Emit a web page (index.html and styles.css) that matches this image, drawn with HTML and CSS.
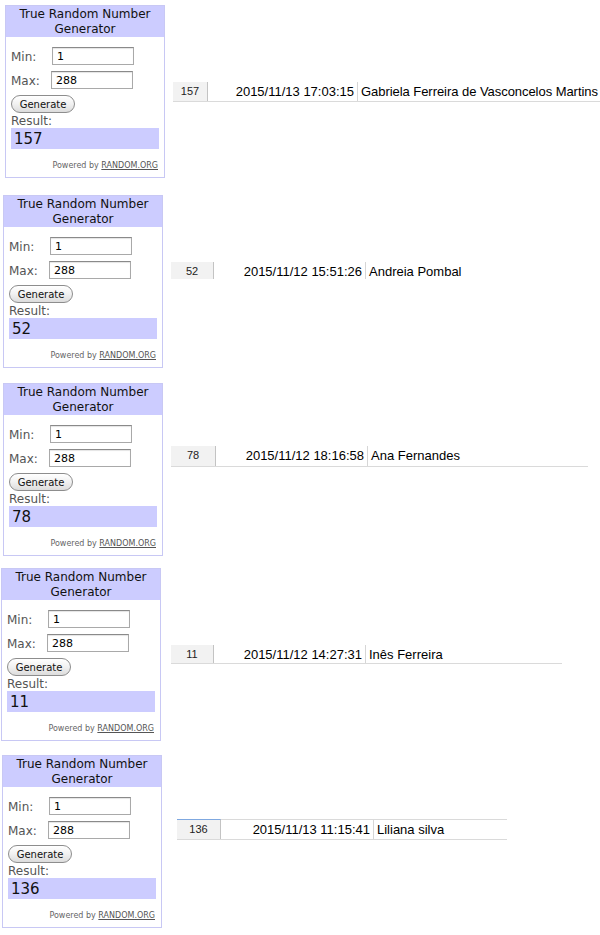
FILE: index.html
```html
<!DOCTYPE html>
<html lang="en">
  <head>
    <meta charset="utf-8">
    <title>True Random Number Generator - draws</title>
    <link rel="stylesheet" href="styles.css">
  </head>
  <body>
    <div class="entry entry-1">
      <div class="trng">
        <div class="trng-head">True Random Number<br>Generator</div>
        <div class="trng-body">
          <div class="field"><label>Min:</label><input type="text" value="1"></div>
          <div class="field"><label>Max:</label><input type="text" value="288" class="shift"></div>
          <button>Generate</button>
          <div class="result-label">Result:</div>
          <div class="result">157</div>
          <div class="powered">Powered by <a href="#">RANDOM.ORG</a></div>
        </div>
      </div>
      <div class="sheet-row">
        <div class="cell-num">157</div>
        <div class="cell-date">2015/11/13 17:03:15</div>
        <div class="cell-name">Gabriela Ferreira de Vasconcelos Martins</div>
      </div>
    </div>

    <div class="entry entry-2">
      <div class="trng">
        <div class="trng-head">True Random Number<br>Generator</div>
        <div class="trng-body">
          <div class="field"><label>Min:</label><input type="text" value="1"></div>
          <div class="field"><label>Max:</label><input type="text" value="288" class="shift"></div>
          <button>Generate</button>
          <div class="result-label">Result:</div>
          <div class="result">52</div>
          <div class="powered">Powered by <a href="#">RANDOM.ORG</a></div>
        </div>
      </div>
      <div class="sheet-row">
        <div class="cell-num">52</div>
        <div class="cell-date">2015/11/12 15:51:26</div>
        <div class="cell-name">Andreia Pombal</div>
      </div>
    </div>

    <div class="entry entry-3">
      <div class="trng">
        <div class="trng-head">True Random Number<br>Generator</div>
        <div class="trng-body">
          <div class="field"><label>Min:</label><input type="text" value="1"></div>
          <div class="field"><label>Max:</label><input type="text" value="288" class="shift"></div>
          <button>Generate</button>
          <div class="result-label">Result:</div>
          <div class="result">78</div>
          <div class="powered">Powered by <a href="#">RANDOM.ORG</a></div>
        </div>
      </div>
      <div class="sheet-row">
        <div class="cell-num">78</div>
        <div class="cell-date">2015/11/12 18:16:58</div>
        <div class="cell-name">Ana Fernandes</div>
      </div>
    </div>

    <div class="entry entry-4">
      <div class="trng">
        <div class="trng-head">True Random Number<br>Generator</div>
        <div class="trng-body">
          <div class="field"><label>Min:</label><input type="text" value="1"></div>
          <div class="field"><label>Max:</label><input type="text" value="288" class="shift"></div>
          <button>Generate</button>
          <div class="result-label">Result:</div>
          <div class="result">11</div>
          <div class="powered">Powered by <a href="#">RANDOM.ORG</a></div>
        </div>
      </div>
      <div class="sheet-row">
        <div class="cell-num">11</div>
        <div class="cell-date">2015/11/12 14:27:31</div>
        <div class="cell-name">Inês Ferreira</div>
      </div>
    </div>

    <div class="entry entry-5">
      <div class="trng">
        <div class="trng-head">True Random Number<br>Generator</div>
        <div class="trng-body">
          <div class="field"><label>Min:</label><input type="text" value="1"></div>
          <div class="field"><label>Max:</label><input type="text" value="288" class="shift"></div>
          <button>Generate</button>
          <div class="result-label">Result:</div>
          <div class="result">136</div>
          <div class="powered">Powered by <a href="#">RANDOM.ORG</a></div>
        </div>
      </div>
      <div class="sheet-row">
        <div class="cell-num">136</div>
        <div class="cell-date">2015/11/13 11:15:41</div>
        <div class="cell-name">Liliana silva</div>
      </div>
    </div>
  </body>
</html>
```

FILE: styles.css
```css
html, body {
  margin: 0;
  background: #fff;
  overflow-x: hidden;
}
body {
  font-family: "DejaVu Sans", Verdana, sans-serif;
  color: #000;
}
.entry {
  display: flex;
  align-items: flex-start;
  width: 600px;
}
.entry-1 { margin: 5px 0 0 5px; }
.entry-2 { margin: 17px 0 0 3px; }
.entry-3 { margin: 15px 0 0 3px; }
.entry-4 { margin: 12px 0 0 1px; }
.entry-5 { margin: 14px 0 0 2px; }

/* random.org widget */
.trng {
  flex: none;
  width: 160px;
  height: 173px;
  box-sizing: border-box;
  border: 1px solid #c8c8f4;
}
.trng-head {
  height: 30px;
  padding-top: 1px;
  background: #ccccff;
  text-align: center;
  font-size: 12px;
  line-height: 15px;
  color: #111;
}
.trng-body {
  padding: 10px 5px 0 5px;
}
.field {
  display: flex;
  align-items: center;
  height: 18px;
  margin-bottom: 6px;
}
.field label {
  width: 41px;
  padding-top: 1px;
  font-size: 12px;
  color: #555;
}
.field input {
  width: 82px;
  height: 18px;
  box-sizing: border-box;
  margin: 0;
  padding: 0 0 0 4px;
  border: 1px solid #a9a9a9;
  border-top-color: #8a8a8a;
  box-shadow: inset 0 1px 1px #e4e4e4;
  font-family: "DejaVu Sans", Verdana, sans-serif;
  font-size: 11px;
  color: #000;
  background: #fff;
}
.field input.shift {
  margin-left: -1px;
}
button {
  display: block;
  width: 64px;
  height: 18px;
  margin: 0;
  padding: 0;
  border: 1px solid #8d8d8d;
  border-radius: 9px;
  background: linear-gradient(#ffffff, #f1f1f1 50%, #dcdcdc);
  font-family: "DejaVu Sans", Verdana, sans-serif;
  font-size: 10px;
  color: #111;
  cursor: pointer;
}
.result-label {
  padding-top: 1px;
  font-size: 12px;
  line-height: 14px;
  color: #555;
}
.result {
  height: 21px;
  line-height: 22px;
  padding-left: 3px;
  background: #ccccff;
  font-size: 15px;
  color: #111;
}
.powered {
  margin-top: 11px;
  padding-right: 1px;
  text-align: right;
  font-size: 8px;
  line-height: 12px;
  color: #666;
}
.powered a {
  color: #555;
}

/* spreadsheet row */
.sheet-row {
  flex: none;
  display: flex;
  height: 20px;
  box-sizing: border-box;
  border-bottom: 1px solid #dadada;
  font-family: "Liberation Sans", Arial, sans-serif;
  white-space: nowrap;
}
.cell-num {
  width: 34px;
  background: #f2f2f2;
  border-right: 1px solid #c3c3c3;
  text-align: center;
  font-size: 11px;
  line-height: 19px;
  color: #222;
}
.cell-date {
  width: 148px;
  padding-right: 3px;
  border-right: 1px solid #d6d6d6;
  text-align: right;
  font-size: 13px;
  line-height: 19px;
}
.cell-name {
  padding-left: 3px;
  font-size: 13px;
  line-height: 19px;
}

.entry-1 .sheet-row { margin: 77px 0 0 8px; width: 427px; }
.entry-1 .cell-date { width: 146px; }
.entry-1 .cell-name { padding-left: 3px; letter-spacing: -0.05px; }
.entry-2 .sheet-row { margin: 67px 0 0 8px; border-bottom-color: transparent; height: 18px; }
.entry-2 .cell-num { width: 42px; }
.entry-3 .sheet-row { margin: 63px 0 0 8px; width: 417px; height: 21px; }
.entry-3 .cell-num { width: 44px; }
.entry-3 .cell-date { width: 148px; }
.entry-4 .sheet-row { margin: 77px 0 0 10px; width: 391px; height: 19px; }
.entry-4 .cell-num { width: 42px; }
.entry-5 .sheet-row { margin: 64px 0 0 15px; width: 330px; height: 21px; border-top: 1px solid #dadada; }
.entry-5 .cell-num { width: 43px; border-top: 1px solid #7fa8e0; margin-top: -1px; }
.entry-5 .cell-date { width: 149px; }
```
